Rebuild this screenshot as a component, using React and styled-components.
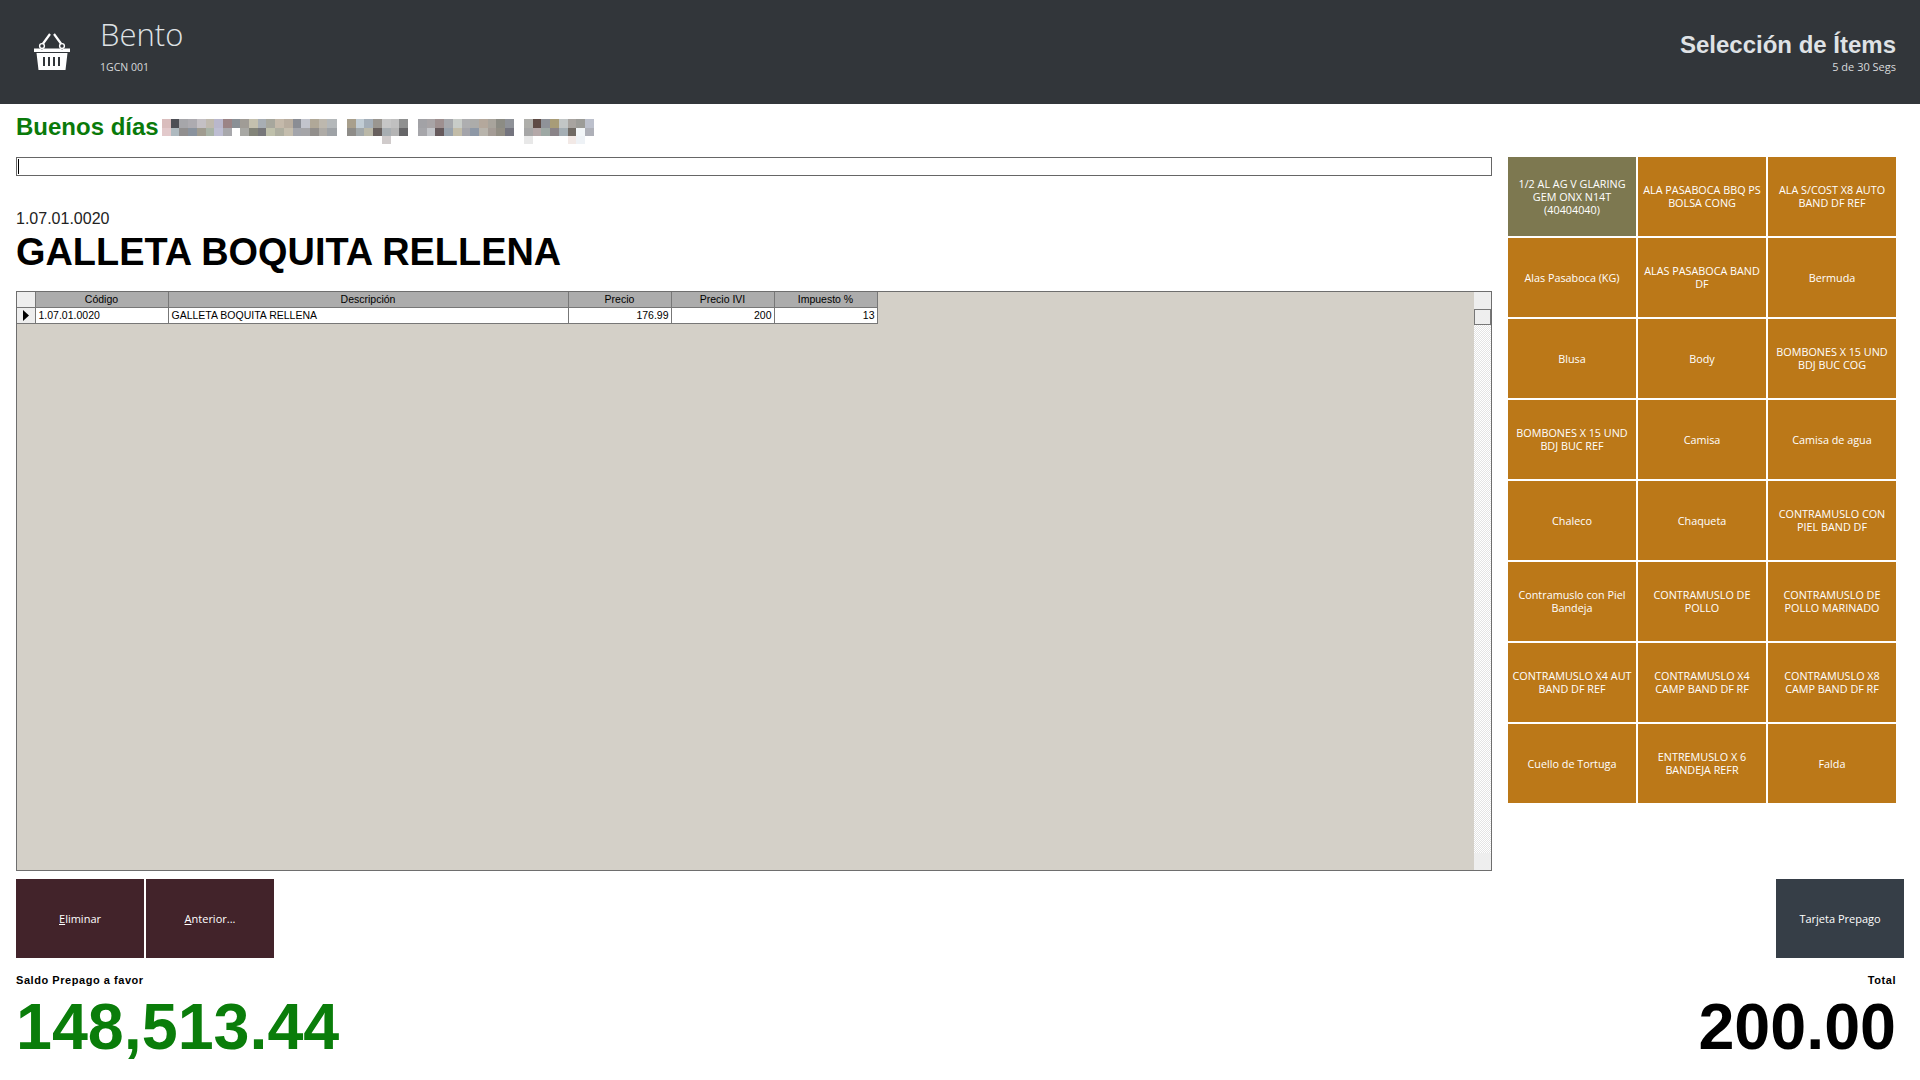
import React from "react";
import styled, { createGlobalStyle } from "styled-components";

const Global = createGlobalStyle`
  html, body { margin: 0; padding: 0; background: #fff; }
  body { width: 1920px; height: 1080px; overflow: hidden; font-family: "Liberation Sans", Arial, sans-serif; }
`;

const Page = styled.div`
  width: 1920px; height: 1080px; display: flex; flex-direction: column;
`;
const Header = styled.header`
  height: 104px; flex: none; background: #32363a; display: flex; align-items: flex-start; justify-content: space-between;
  padding: 0 24px 0 33px; box-sizing: border-box;
`;
const Brand = styled.div` display: flex; align-items: flex-start; gap: 29px; `;
const BasketBox = styled.div` padding-top: 33px; height: 38px; `;
const BrandText = styled.div` display: flex; flex-direction: column; padding-top: 14px; `;
const BrandName = styled.div`
  font: 300 31px/40px "Open Sans", sans-serif; color: #dfe2e5;
`;
const BrandSub = styled.div`
  font: 400 10.5px/14px "Open Sans", sans-serif; color: #d8dadc; margin-top: 6px;
`;
const StepBox = styled.div` display: flex; flex-direction: column; align-items: flex-end; padding-top: 30px; `;
const StepTitle = styled.div` font: 700 24px/30px "Liberation Sans", sans-serif; color: #dfe2e5; `;
const StepSub = styled.div` font: 400 11px/14px "Open Sans", sans-serif; color: #d8dadc; `;

const Greeting = styled.div`
  height: 53px; flex: none; box-sizing: border-box; padding: 9px 0 0 16px; display: flex; align-items: flex-start; gap: 2px;
`;
const GreetText = styled.div` font: 700 24px/27px "Liberation Sans", sans-serif; color: #0a7a0a; `;

const Main = styled.div` flex: none; height: 714px; display: flex; padding-left: 16px; `;
const LeftCol = styled.div` width: 1476px; display: flex; flex-direction: column; `;
const SearchBox = styled.div`
  height: 19px; box-sizing: border-box; border: 1px solid #666; background: #fff; padding: 1px;
`;
const Caret = styled.div` width: 1px; height: 15px; background: #000; `;
const ItemCode = styled.div` font: 400 16px/18px "Liberation Sans", sans-serif; color: #222; margin-top: 34px; `;
const ItemName = styled.div` font: 700 37.9px/46px "Liberation Sans", sans-serif; color: #000; margin-top: 1px; `;

const GridPanel = styled.div`
  margin-top: 16px; height: 580px; flex: none; box-sizing: border-box; border: 1px solid #6e6e6e; background: #d4d0c8; display: flex; justify-content: space-between;
`;
const Table = styled.table`
  border-collapse: collapse; table-layout: fixed; width: 860px; height: 32px; font: 400 10.5px/15px "Liberation Sans", sans-serif; color: #000;
  align-self: flex-start;
`;
const HeadCell = styled.th`
  background: #acacac; font-weight: 400; text-align: center; padding: 0; height: 15px; border: 1px solid #777; border-top: 0;
  &:first-child { background: #eee; border-left: 0; }
`;
const BodyCell = styled.td`
  background: #fff; height: 15px; padding: ${(p) => (p.$num ? "0 2px" : "0 3px")}; text-align: ${(p) => (p.$num ? "right" : "left")}; border: 1px solid #777; overflow: hidden; white-space: nowrap;
`;
const RowHead = styled.td` background: #eee; border: 1px solid #777; border-left: 0; padding: 0; text-align: center; line-height: 0; `;

const ScrollBar = styled.div`
  width: 17px; display: flex; flex-direction: column; background: repeating-conic-gradient(#e4e4e4 0 25%, #fff 0 50%) 0 0 / 2px 2px;
`;
const ScrollBtn = styled.div` height: 17px; flex: none; background: #eeeeee; `;
const ScrollThumb = styled.div` height: 16px; flex: none; background: #eeeeee; border: 1px solid #777; box-sizing: border-box; `;
const ScrollGap = styled.div` flex: 1; `;

const ActionRow = styled.div` display: flex; gap: 2px; `;

const Tiles = styled.div`
  margin-left: 16px; width: 388px; display: grid; grid-template-columns: repeat(3, 128px); grid-auto-rows: 79px; gap: 2px; align-content: start;
`;
const Tile = styled.div`
  background: ${(p) => (p.$sel ? "#7d7850" : "#bb7818")}; color: #fff; display: flex; align-items: center; justify-content: center; text-align: center;
  font: 400 10.8px/13px "Open Sans", sans-serif; padding: 0 2px 1px; box-sizing: border-box;
`;

const Bottom = styled.div` flex: 1; display: flex; justify-content: space-between; align-items: flex-start; padding: 8px 24px 0 16px; `;
const ActionBtn = styled.div`
  width: 128px; height: 79px; background: ${(p) => p.$bg}; color: #fff; display: flex; align-items: center; justify-content: center;
  font: 400 11px/13px "Open Sans", sans-serif;
`;
const U = styled.span` text-decoration: underline; `;
const RightBottom = styled.div` display: flex; flex-direction: column; align-items: flex-end; `;
const RightBtnRow = styled.div` margin-right: -8px; height: 79px; `;
const Label = styled.div` font: 700 11px/14px "Liberation Sans", sans-serif; color: #000; margin-top: 15px; letter-spacing: 0.55px; `;
const Amount = styled.div` font: 700 64.6px/74px "Liberation Sans", sans-serif; color: ${(p) => p.$c}; margin-top: 3px; `;

const Basket = () => (
  <svg width="38" height="38" viewBox="0 0 38 38" fill="none">
    <path d="M9 12 L17 1 M29 12 L21 1" stroke="#fff" strokeWidth="2.2" />
    <circle cx="9" cy="13" r="2.4" stroke="#fff" strokeWidth="1.4" fill="#32363a" />
    <circle cx="29" cy="13" r="2.4" stroke="#fff" strokeWidth="1.4" fill="#32363a" />
    <path d="M1 15.5 H6.5 L9 16.5 L11 15.5 H27 L29 16.5 L31.500 15.500 H37 V19 H1 Z" fill="#fff" />
    <path fillRule="evenodd" d="M3.500 20 H34.500 L32.500 37 H5.500 Z M10 24 V33 H12 V24 Z M15 24 V33 H17 V24 Z M20 24 V33 H22 V24 Z M25 24 V33 H27 V24 Z" fill="#fff" />
  </svg>
);

const mosaicTop = [
  ["#d9bdbd","#4d4f55","#a6a6aa","#adabb0","#c4c0c4","#bfb9ae","#b9b7cc","#9b8486","#8a9096","#a09c96","#c4c0ae","#a8aeb4","#a7a79d","#c4b9aa","#b8ad9f","#8a8d94","#c2c4cc","#b0a898","#bdb8ae","#b4b8ba"],
  ["#a89f8c","#c1ccd4","#a4aeb8","#9a9690","#c6c6c6","#c0c0c0","#8f9090"],
  ["#a2a2a6","#a8a4a6","#9e9090","#a6a8ac","#c8ccc8","#aeaeb0","#acacaa","#b4a89c","#a8a49c","#8c8c84","#8f9298"],
  ["#aeaeaa","#5e4a44","#8f9298","#a89c78","#c2c6c6","#a8a4a0","#9c9c98","#bcc0cc"],
];
const mosaicBottom = [
  ["#e2c9cb","#aeb9bf","#918f8f","#8a939e","#a09c90","#a9b3a7","#bdbdd2","#a8a8ac","#ffffff","#a8a8a4","#838479","#77777a","#bfc0ab","#aeaea0","#c4bdad","#a3a5ab","#a5a5a8","#928f8c","#aeaba6","#9ea2a6"],
  ["#8e8c88","#a2a8aa","#bab8a8","#68605e","#a8aeb2","#b4b4b4","#666668"],
  ["#a6a6aa","#c2c4c8","#665a5c","#98a2ac","#c2bca8","#a4a4aa","#8e98a6","#b8b4ac","#a49c96","#928e84","#74747e"],
  ["#a6a6a6","#b4a8a8","#9ea8a4","#8a8488","#a4aeb4","#706a64","#f2f6f8","#aeb0b8"],
];
const mosaicExtra = [
  [],
  [null,null,null,null,"#d0cbcb",null,null],
  [],
  ["#e8e8e8",null,null,null,null,"#f2e9e6","#eef2f6",null],
];
const segX = [0, 185, 256, 362];
const CELL = 8.7;

const Mosaic = () => (
  <svg width="434" height="26" viewBox="0 0 434 26" shapeRendering="crispEdges">
    {mosaicTop.map((seg, s) =>
      seg.map((c, i) => (
        <g key={`${s}-${i}`}>
          <rect x={segX[s] + i * CELL} y={0} width={CELL + 0.5} height={8.5} fill={c} />
          <rect x={segX[s] + i * CELL} y={8.5} width={CELL + 0.5} height={8.5} fill={mosaicBottom[s][i]} />
          {mosaicExtra[s][i] ? <rect x={segX[s] + i * CELL} y={17} width={CELL + 0.5} height={8} fill={mosaicExtra[s][i]} /> : null}
        </g>
      ))
    )}
  </svg>
);
const MosaicBox = styled.div` padding-top: 6px; line-height: 0; margin-left: 1px; `;

const tiles = [
  "1/2 AL AG V GLARING GEM ONX N14T (40404040)", "ALA PASABOCA BBQ PS BOLSA CONG", "ALA S/COST X8 AUTO BAND DF REF",
  "Alas Pasaboca (KG)", "ALAS PASABOCA BAND DF", "Bermuda",
  "Blusa", "Body", "BOMBONES X 15 UND BDJ BUC COG",
  "BOMBONES X 15 UND BDJ BUC REF", "Camisa", "Camisa de agua",
  "Chaleco", "Chaqueta", "CONTRAMUSLO CON PIEL BAND DF",
  "Contramuslo con Piel Bandeja", "CONTRAMUSLO DE POLLO", "CONTRAMUSLO DE POLLO MARINADO",
  "CONTRAMUSLO X4 AUT BAND DF REF", "CONTRAMUSLO X4 CAMP BAND DF RF", "CONTRAMUSLO X8 CAMP BAND DF RF",
  "Cuello de Tortuga", "ENTREMUSLO X 6 BANDEJA REFR", "Falda",
];

export default function App() {
  return (
    <Page>
      <Global />
      <Header>
        <Brand>
          <BasketBox><Basket /></BasketBox>
          <BrandText>
            <BrandName>Bento</BrandName>
            <BrandSub>1GCN 001</BrandSub>
          </BrandText>
        </Brand>
        <StepBox>
          <StepTitle>Selección de Ítems</StepTitle>
          <StepSub>5 de 30 Segs</StepSub>
        </StepBox>
      </Header>
      <Greeting>
        <GreetText>Buenos días</GreetText>
        <MosaicBox><Mosaic /></MosaicBox>
      </Greeting>
      <Main>
        <LeftCol>
          <SearchBox><Caret /></SearchBox>
          <ItemCode>1.07.01.0020</ItemCode>
          <ItemName>GALLETA BOQUITA RELLENA</ItemName>
          <GridPanel>
            <Table>
              <colgroup>
                <col width="18" /><col width="133" /><col width="400" /><col width="103" /><col width="103" /><col width="103" />
              </colgroup>
              <thead>
                <tr>
                  <HeadCell />
                  <HeadCell>Código</HeadCell>
                  <HeadCell>Descripción</HeadCell>
                  <HeadCell>Precio</HeadCell>
                  <HeadCell>Precio IVI</HeadCell>
                  <HeadCell>Impuesto %</HeadCell>
                </tr>
              </thead>
              <tbody>
                <tr>
                  <RowHead>
                    <svg width="8" height="11" viewBox="0 0 8 11"><path d="M1 0 L7 5.5 L1 11 Z" fill="#000" /></svg>
                  </RowHead>
                  <BodyCell>1.07.01.0020</BodyCell>
                  <BodyCell>GALLETA BOQUITA RELLENA</BodyCell>
                  <BodyCell $num>176.99</BodyCell>
                  <BodyCell $num>200</BodyCell>
                  <BodyCell $num>13</BodyCell>
                </tr>
              </tbody>
            </Table>
            <ScrollBar>
              <ScrollBtn />
              <ScrollThumb />
              <ScrollGap />
              <ScrollBtn />
            </ScrollBar>
          </GridPanel>
        </LeftCol>
        <Tiles>
          {tiles.map((t, i) => (
            <Tile key={t} $sel={i === 0}>{t}</Tile>
          ))}
        </Tiles>
      </Main>
      <Bottom>
        <div>
          <ActionRow>
            <ActionBtn $bg="#42232a"><span><U>E</U>liminar</span></ActionBtn>
            <ActionBtn $bg="#42232a"><span><U>A</U>nterior...</span></ActionBtn>
          </ActionRow>
          <Label>Saldo Prepago a favor</Label>
          <Amount $c="#0a7d0a">148,513.44</Amount>
        </div>
        <RightBottom>
          <RightBtnRow>
            <ActionBtn $bg="#363e47">Tarjeta Prepago</ActionBtn>
          </RightBtnRow>
          <Label>Total</Label>
          <Amount $c="#000">200.00</Amount>
        </RightBottom>
      </Bottom>
    </Page>
  );
}
